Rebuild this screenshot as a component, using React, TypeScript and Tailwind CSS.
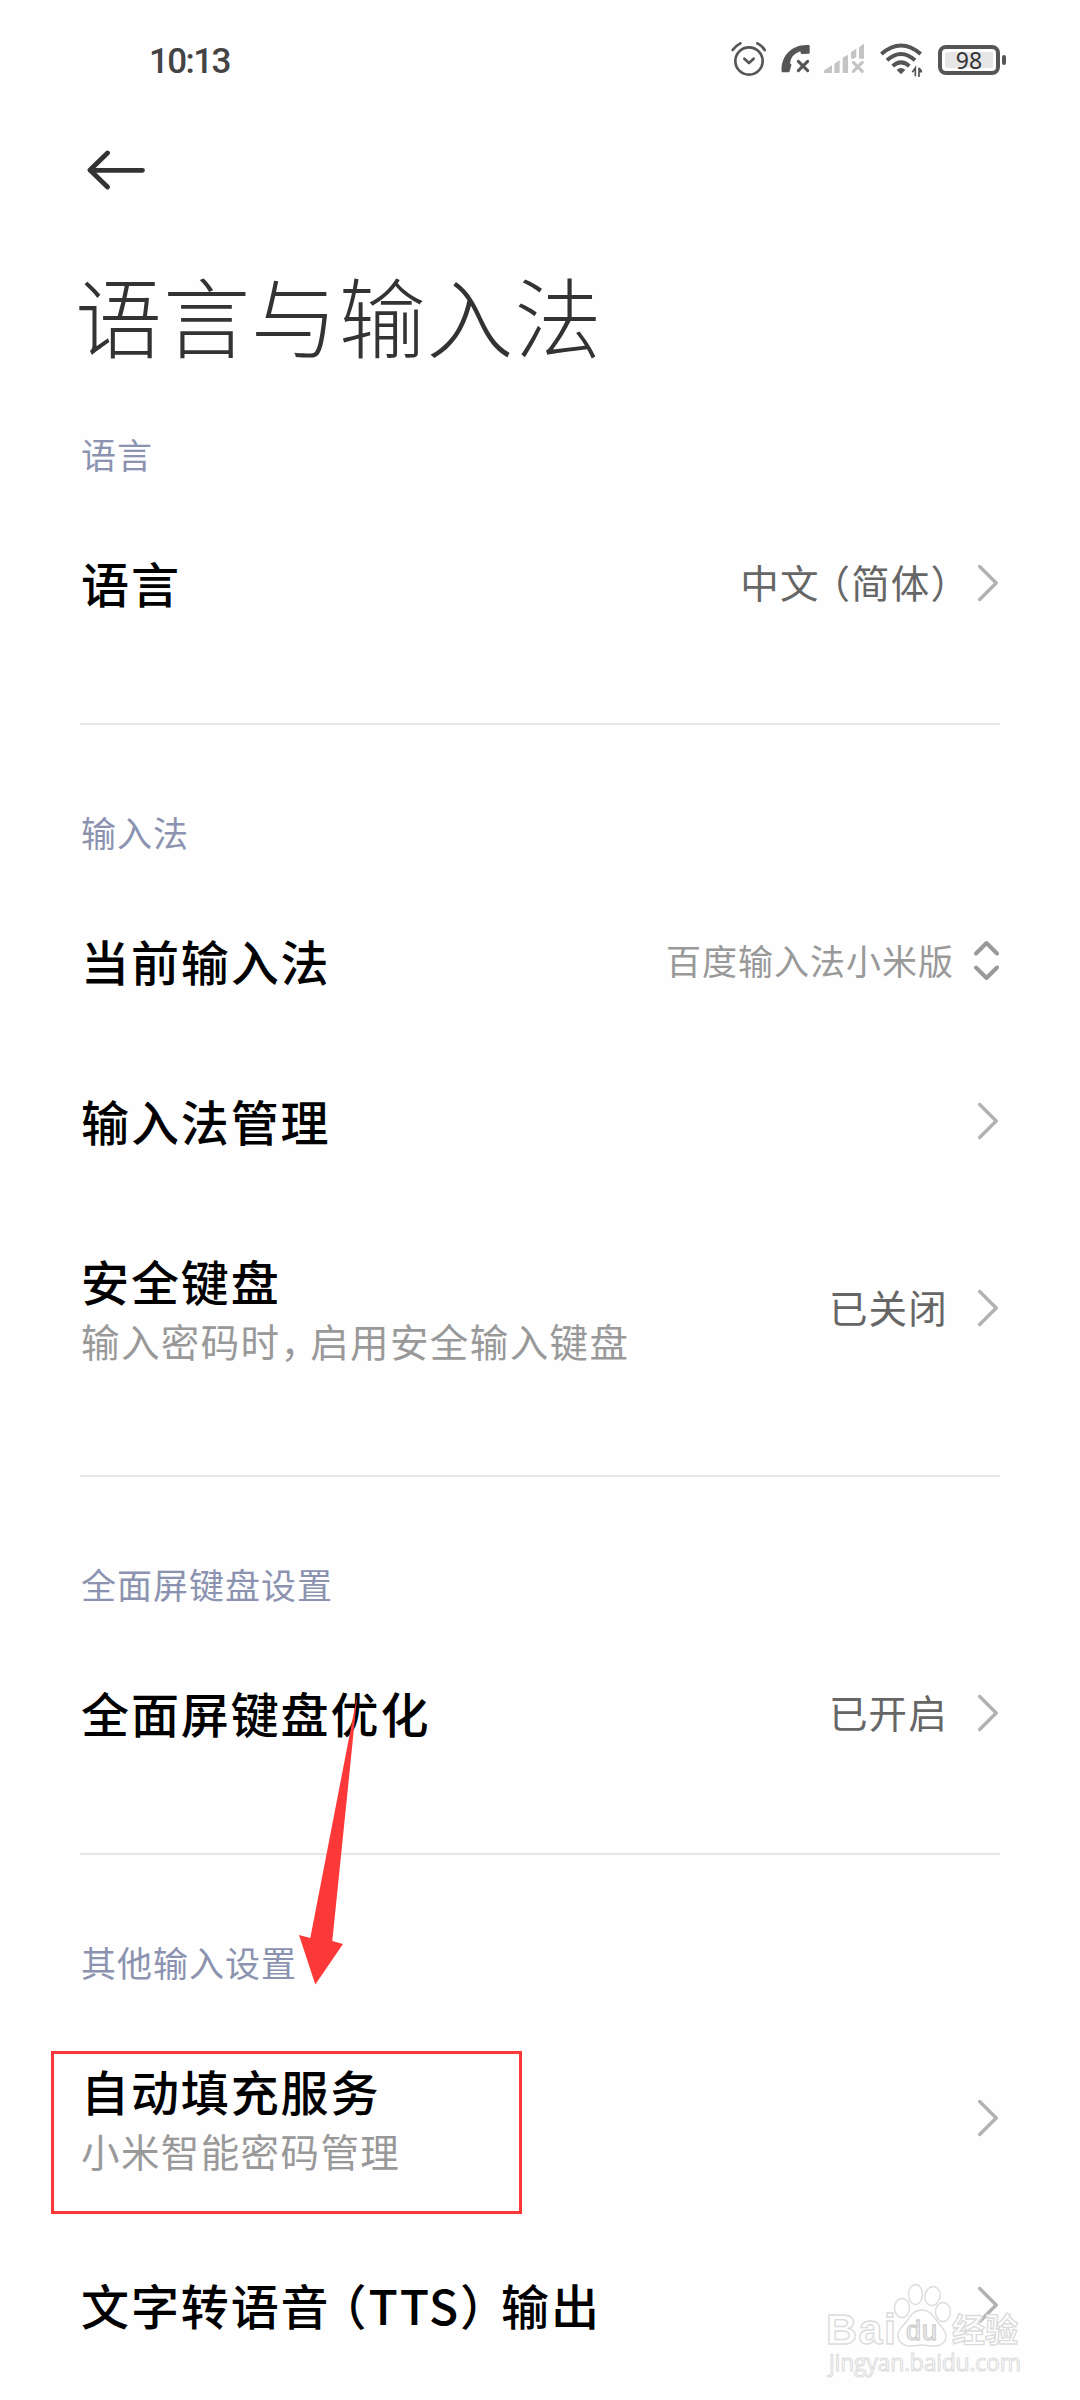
import clsx from 'clsx'
import { FC, ReactNode } from 'react'

const AlarmIcon: FC = () => (
  <svg viewBox="93 69 105 108" className="h-9 w-[35px]" fill="none" stroke="#555" strokeWidth={8} strokeLinecap="round" strokeLinejoin="round">
    <circle cx={147} cy={126} r={41} />
    <path d="M98 93Q107 80 121 73M172 73Q187 80 194 93" />
    <path d="M133 119l14 13 14-13" />
  </svg>
)

const CallOffIcon: FC = () => (
  <svg viewBox="243 69 81 108" className="h-9 w-[27px] overflow-visible">
    <path
      fill="#555"
      d="M329 80v21q0 3-3 3l-20 1q-3 0-4-3l-1-5Q273 106 270 133l3 2q2 1 1 4l-5 18q-1 3-4 3h-18q-2 0-2-2C241 108 280 74 326 78q3 0 3 2Z"
    />
    <path d="M295 127l28 28M323 127l-28 28" stroke="#555" strokeWidth={9} strokeLinecap="round" />
  </svg>
)

const SignalIcon: FC = () => (
  <svg viewBox="369 69 126 108" className="h-9 w-[42px]" fill="#c4c4c4">
    <path d="M372 162v-6q0-2 2-3l22-14v23ZM403 162v-26q0-2 2-3l14-9v38ZM428 162v-44q0-2 2-3l14-8v55ZM453 119v-18q0-2 2-3l14-9v24l-7 6ZM477 119V86q0-2 2-3l11-8h2v44Z" />
    <path d="M460 130l27 27M487 130l-27 27" stroke="#c4c4c4" strokeWidth={9} strokeLinecap="round" />
  </svg>
)

const WifiIcon: FC = () => (
  <svg viewBox="540 69 129 108" className="h-9 w-[43px]" fill="none" stroke="#555" strokeWidth={12}>
    <path d="M544 105Q603 54 662 105M561 124Q603 86 645 124M578 141Q603 119 628 141" />
    <path d="M590 153q13-12 26 0l-10 10q-3 3-6 0Z" fill="#555" stroke="none" />
    <path d="M637 160l9-13v25M666 158h-9m0-12v28M657 147l8 10" strokeWidth={5} />
  </svg>
)

const Battery: FC<{ level: number }> = ({ level }) => (
  <div className="flex items-center">
    <div className="h-[30px] w-[62px] rounded-[8px] border-4 border-[#555] p-[3px]">
      <div className="flex h-full items-center justify-center rounded-[2px] bg-[#e6e6e6] font-['Noto_Sans'] text-[23px] leading-none text-[#333]">
        {level}
      </div>
    </div>
    <div className="ml-[2px] h-[10px] w-[4px] rounded-full bg-[#555]" />
  </div>
)

const StatusBar: FC = () => (
  <header className="flex h-[120px] items-start justify-between pt-[42px] pr-[74px] pl-[149px]">
    <span className="pt-px font-['Roboto'] text-[35px] leading-[38px] font-medium tracking-[-1.6px] text-[#444]">
      10:13
    </span>
    <div className="flex items-center gap-[15px]">
      <AlarmIcon />
      <CallOffIcon />
      <SignalIcon />
      <WifiIcon />
      <Battery level={98} />
    </div>
  </header>
)

const Chevron: FC = () => (
  <svg viewBox="0 0 22 38" className="h-[38px] w-[22px]" fill="none" stroke="#b2b2b2" strokeWidth={3.4} strokeLinecap="round" strokeLinejoin="round">
    <path d="M1.7 2.5L18.2 19 1.7 35.5" />
  </svg>
)

const UpDown: FC = () => (
  <svg viewBox="0 0 26 42" className="h-[42px] w-[26px]" fill="none" stroke="#999" strokeWidth={4} strokeLinecap="round" strokeLinejoin="round">
    <path d="M2 13.5L12.5 3 23 13.5M2 27.5L12.5 38 23 27.5" />
  </svg>
)

// Full-width punctuation set at half width
const Punct: FC<{ className?: string; children: string }> = ({ className, children }) => (
  <span className={clsx("[font-feature-settings:'halt']", className)}>{children}</span>
)

interface RowProps {
  title: ReactNode
  summary?: ReactNode
  value?: ReactNode
  select?: boolean
}

const Row: FC<RowProps> = ({ title, summary, value, select }) => (
  <div
    className={clsx(
      'flex items-center justify-between whitespace-nowrap',
      summary ? 'h-[214px]' : 'h-[160px]'
    )}
  >
    <div className={clsx('pl-px', summary ? 'pt-[4px]' : 'pb-[3px]')}>
      <div className="text-[48px] leading-[60px] font-medium tracking-[1.9px] text-black">{title}</div>
      {summary && (
        <div className="text-[38.5px] leading-[60px] tracking-[1.4px] text-[#999]">{summary}</div>
      )}
    </div>
    <div className="flex items-center">
      {value && (
        <span
          className={clsx(
            'pb-[2px]',
            select
              ? 'mr-5 text-[35px] tracking-[1px] text-[#999]'
              : 'mr-[30px] text-[38.5px] tracking-[1.2px] text-[#666]'
          )}
        >
          {value}
        </span>
      )}
      {select ? <UpDown /> : <Chevron />}
    </div>
  </div>
)

const Section: FC<{ label: string; first?: boolean; children: ReactNode }> = ({ label, first, children }) => (
  <section className={clsx('mx-20 pb-[60px]', !first && 'border-t-2 border-[#e6e6e6] pt-[58px]')}>
    <h2 className="flex h-[98px] items-center pl-px text-[35px] tracking-[1px] text-[#8c93b0]">{label}</h2>
    {children}
  </section>
)

const Watermark: FC = () => (
  <svg
    viewBox="820 2276 210 110"
    className="absolute top-[2276px] left-[820px] h-[110px] w-[210px]"
    fill="#fff"
    fillOpacity={0.5}
    stroke="#dcdcdc"
    strokeWidth={1.4}
  >
    <text x={826} y={2344} textLength={70} className="font-['Liberation_Sans'] text-[43px] font-bold">Bai</text>
    <ellipse cx={902} cy={2308} rx={7.5} ry={9.5} />
    <ellipse cx={915.5} cy={2294.5} rx={7} ry={10} />
    <ellipse cx={932.5} cy={2296} rx={7.5} ry={9.5} transform="rotate(12 932.5 2296)" />
    <ellipse cx={943} cy={2312} rx={7.5} ry={9.5} />
    <path d="M922 2310c8 0 11 6 15 11 4 6 9 9 9 15 0 7-6 10-12 10-5 0-8-1-12-1s-7 1-12 1c-7 0-12-4-12-11 0-6 5-9 9-14 4-6 7-11 15-11Z" />
    <text x={906} y={2340} textLength={31} className="font-['Liberation_Sans'] text-[27px]" stroke="#cfcfcf">du</text>
    <text x={952} y={2342} textLength={66} className="font-['Noto_Sans_CJK_SC'] text-[33px] font-bold">经验</text>
    <text x={829} y={2371} textLength={192} className="font-['Open_Sans'] text-[23px]" strokeWidth={1}>jingyan.baidu.com</text>
  </svg>
)

const App: FC = () => (
  <div className="relative h-[2400px] w-[1080px] overflow-hidden bg-[#fefefe] font-['Noto_Sans_CJK_SC',sans-serif]">
    <StatusBar />

    <div className="pt-[30px] pl-[86px]">
      <svg viewBox="0 0 60 40" className="h-[40px] w-[60px]" fill="none" stroke="#333" strokeWidth={4.8} strokeLinecap="round" strokeLinejoin="round">
        <path d="M21.5 3L4 20l17.5 17M4 20.3h52.5" />
      </svg>
    </div>

    <h1 className="flex h-[215px] items-center pt-[33px] pl-[75px] text-[87px] leading-none font-light tracking-[0.9px] text-[#333]">
      语言与输入法
    </h1>

    <Section label="语言" first>
      <Row
        title="语言"
        value={
          <>
            中文<Punct className="ml-[11px]">（</Punct>简体<Punct className="-mr-[3px]">）</Punct>
          </>
        }
      />
    </Section>

    <Section label="输入法">
      <Row title="当前输入法" value="百度输入法小米版" select />
      <Row title="输入法管理" />
      <Row
        title="安全键盘"
        summary={
          <>
            输入密码时<Punct className="mr-[9px]">，</Punct>启用安全输入键盘
          </>
        }
        value="已关闭"
      />
    </Section>

    <Section label="全面屏键盘设置">
      <Row title="全面屏键盘优化" value="已开启" />
    </Section>

    <Section label="其他输入设置">
      <Row title="自动填充服务" summary="小米智能密码管理" />
      <Row
        title={
          <>
            文字转语音<Punct className="ml-[12px]">（</Punct>TTS<Punct className="mr-[15px]">）</Punct>输出
          </>
        }
      />
    </Section>

    {/* Annotations */}
    <svg viewBox="290 1690 60 296" className="absolute top-[1690px] left-[290px] h-[296px] w-[60px] overflow-visible" fill="#fd3838">
      <path d="M357.5 1694L332.3 1941 343 1944 315.3 1984.5 299 1935 310.3 1938Z" />
    </svg>
    <div className="absolute top-[2051px] left-[51px] h-[163px] w-[471px] border-[3px] border-[#fd3838]" />
    <Watermark />
  </div>
)

export default App
